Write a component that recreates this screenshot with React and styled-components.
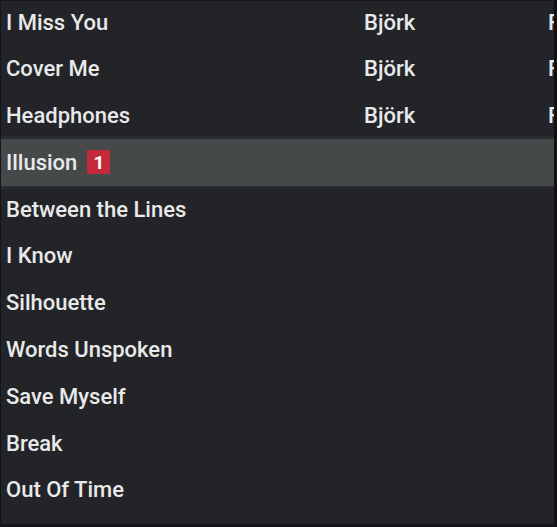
import React from "react";
import styled, { createGlobalStyle } from "styled-components";

const GlobalStyle = createGlobalStyle`
  html, body {
    margin: 0;
    padding: 0;
    background: #141517;
  }
  * {
    box-sizing: border-box;
  }
`;

const StyledTrackList = styled.div`
  width: 557px;
  height: 527px;
  overflow: hidden;
  background-color: #232428;
  border-top: 1px solid #141517;
  border-left: 1px solid #141517;
  border-right: 3px solid #101113;
  border-bottom: 3px solid #141517;
  font-family: Roboto, "Liberation Sans", sans-serif;
`;

const StyledRows = styled.ul`
  margin: -2.4px 0 0 0;
  padding: 0;
  list-style: none;
`;

const StyledRow = styled.li`
  height: 46.8px;
  display: grid;
  grid-template-columns: 358px 184px 1fr;
  align-items: center;
  padding-left: 5px;
  white-space: nowrap;
  color: #e9e9ea;
  font-size: 22px;
  font-weight: 500;
  background-color: ${(props) => (props.isActive ? "#46494a" : "transparent")};
  box-shadow: ${(props) =>
    props.isActive ? "0 0 0 3px rgba(255, 255, 255, 0.03)" : "none"};
`;

const StyledCell = styled.span`
  display: flex;
  align-items: center;
  overflow: hidden;
`;

const StyledBadge = styled.span`
  display: inline-flex;
  align-items: center;
  justify-content: center;
  width: 23px;
  height: 24px;
  margin-left: 10px;
  background-color: #c62a3a;
  color: #ffffff;
  font-size: 19px;
  font-weight: 700;
`;

const tracks = [
  { title: "I Miss You", artist: "Björk", extra: "F" },
  { title: "Cover Me", artist: "Björk", extra: "F" },
  { title: "Headphones", artist: "Björk", extra: "F" },
  { title: "Illusion", badge: 1, active: true },
  { title: "Between the Lines" },
  { title: "I Know" },
  { title: "Silhouette" },
  { title: "Words Unspoken" },
  { title: "Save Myself" },
  { title: "Break" },
  { title: "Out Of Time" },
  { title: "" },
];

const App = () => {
  return (
    <>
      <GlobalStyle />
      <StyledTrackList>
        <StyledRows>
          {tracks.map((track, index) => (
            <StyledRow key={index} isActive={track.active}>
              <StyledCell>
                {track.title}
                {track.badge && <StyledBadge>{track.badge}</StyledBadge>}
              </StyledCell>
              <StyledCell>{track.artist}</StyledCell>
              <StyledCell>{track.extra}</StyledCell>
            </StyledRow>
          ))}
        </StyledRows>
      </StyledTrackList>
    </>
  );
};

export default App;
